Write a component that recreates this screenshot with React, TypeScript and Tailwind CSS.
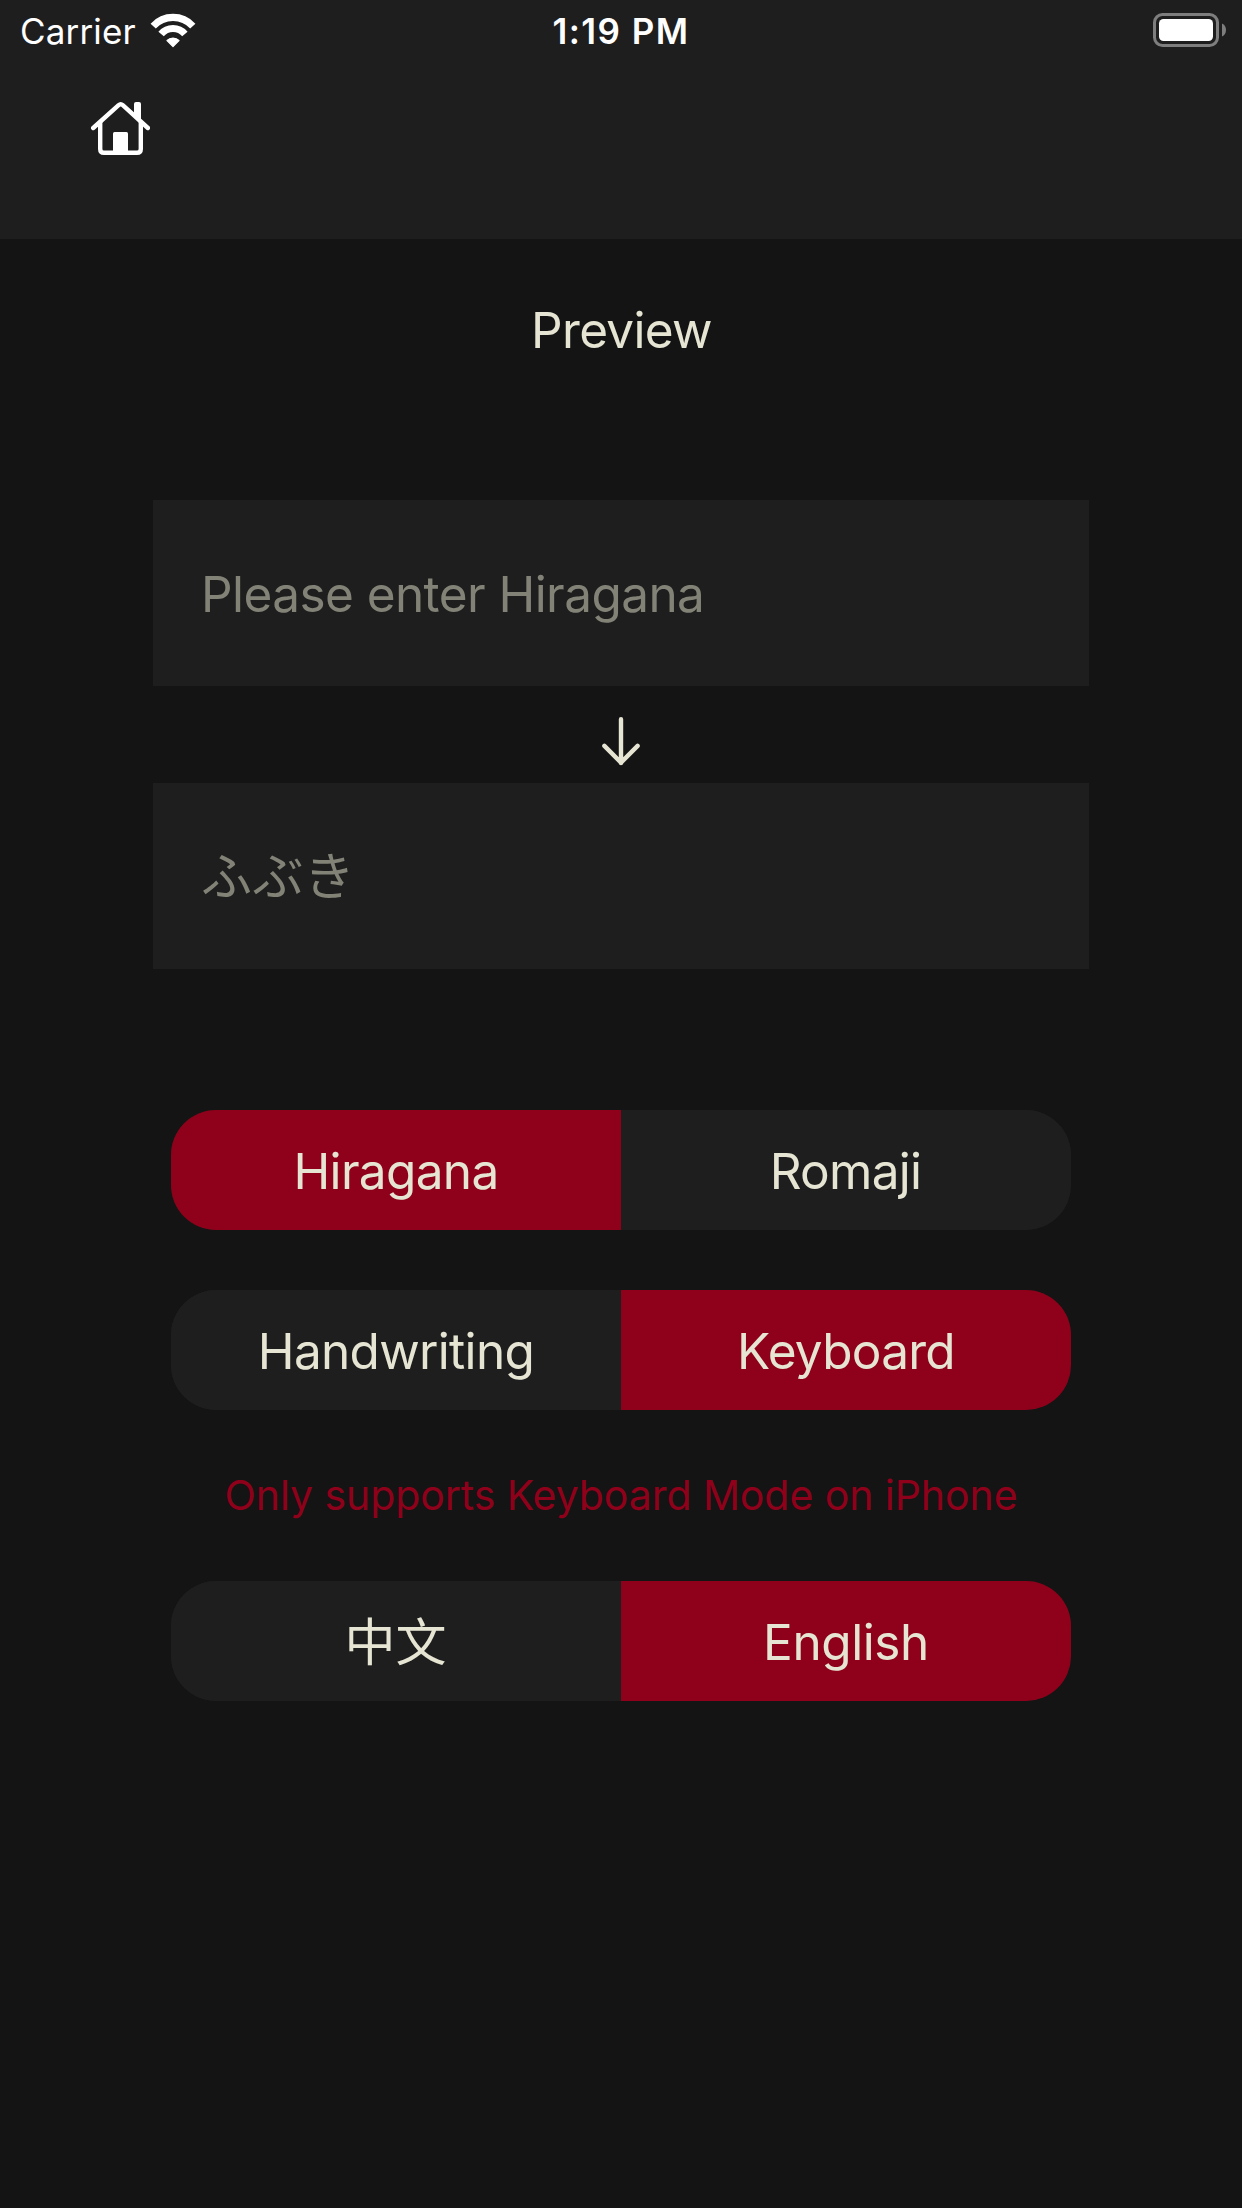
import React from 'react';

function WifiIcon() {
  return (
    <svg className="ml-[14px] h-[35px] w-[46px]" viewBox="0 0 46 35" fill="none">
      <path d="M3.2 13.1A26.9 26.9 0 0 1 42.8 13.1" stroke="#fff" strokeWidth="7.1" />
      <path d="M11.1 21A15.7 15.7 0 0 1 34.9 21" stroke="#fff" strokeWidth="7.1" />
      <path
        d="M17 27.5A8.6 8.6 0 0 1 29 27.5L23 33.5Z"
        fill="#fff"
        stroke="#fff"
        strokeWidth="1.2"
        strokeLinejoin="round"
      />
    </svg>
  );
}

function BatteryIcon() {
  return (
    <svg className="h-[34px] w-[74px]" viewBox="0 0 74 34" fill="none">
      <rect x="1.5" y="1.5" width="63" height="31" rx="8" stroke="#7e7e7e" strokeWidth="3" />
      <rect x="6" y="6" width="54" height="22" rx="4.5" fill="#fff" />
      <path d="M69 10.5C71.5 11.5 73 14 73 17C73 20 71.5 22.5 69 23.5Z" fill="#7e7e7e" />
    </svg>
  );
}

function HomeIcon() {
  return (
    <svg className="h-[54px] w-[60px]" viewBox="90 102 60 54" fill="none">
      <path d="M134 117V104Q134 102 136 102H139Q141 102 141 104V123Z" fill="#fff" />
      <path
        d="M93.2 128L118.6 105.2Q120.7 103.4 122.8 105.2L147.9 128"
        stroke="#fff"
        strokeWidth="4.4"
        strokeLinecap="round"
      />
      <path d="M100.2 122V149Q100.2 152.8 104 152.8H137Q140.8 152.8 140.8 149V122" stroke="#fff" strokeWidth="4.4" />
      <path d="M113 153V133.5Q113 132 114.5 132H126.5Q128 132 128 133.5V153Z" fill="#fff" />
    </svg>
  );
}

function ArrowDown() {
  return (
    <svg className="h-[50px] w-[40px]" viewBox="0 0 40 50" fill="none">
      <path
        d="M20 3.2V47M3.4 29.9L20 46.6L36.6 29.9"
        stroke="#e6e5d3"
        strokeWidth="4.4"
        strokeLinecap="round"
        strokeLinejoin="round"
      />
    </svg>
  );
}

type Option = { label: string; active?: boolean; className: string };

function Segmented({ options }: { options: [Option, Option] }) {
  return (
    <div className="grid h-[120px] w-[900px] grid-cols-2 overflow-hidden rounded-[45px] bg-[#1e1e1e]">
      {options.map((o) => (
        <button
          key={o.label}
          className={`flex items-center justify-center ${o.active ? 'bg-[#8f001a]' : 'bg-[#1e1e1e]'} ${o.className}`}
        >
          {o.label}
        </button>
      ))}
    </div>
  );
}

export default function App() {
  return (
    <div className="flex h-[2208px] w-[1242px] flex-col bg-[#141414] font-['Inter','Noto_Sans_CJK_SC',sans-serif] text-[49.5px] text-[#e6e5d3]">
      <header className="h-[239px] bg-[#1e1e1e] text-white">
        <div className="grid h-[60px] grid-cols-3 items-center pl-[20px] pr-[15px] text-[35px] leading-[58px]">
          <div className="flex items-center">
            <span className="pt-[2px] tracking-[0.15px]">Carrier</span>
            <WifiIcon />
          </div>
          <div className="pt-[2px] pr-[5px] text-center font-[560] tracking-[1.45px]">1:19 PM</div>
          <div className="flex justify-end">
            <BatteryIcon />
          </div>
        </div>
        <button className="mt-[42px] ml-[90px] block">
          <HomeIcon />
        </button>
      </header>

      <main className="flex flex-col items-center">
        <h1 className="flex h-[182px] items-center pl-[1px] tracking-[-0.68px]">Preview</h1>

        <div className="mt-[79px] flex h-[186px] w-[936px] items-center bg-[#1e1e1e] pt-[2px] pl-[48px] tracking-[-0.57px] text-[#828277]">
          Please enter Hiragana
        </div>
        <div className="flex h-[97px] items-center justify-center pt-[14px] pb-[1px]">
          <ArrowDown />
        </div>
        <div className="flex h-[186px] w-[936px] items-center bg-[#1e1e1e] pb-[6px] pl-[48px] font-['Noto_Sans_CJK_JP',sans-serif] text-[51px] tracking-[0.4px] text-[#828277]">
          ふぶき
        </div>

        <div className="mt-[141px] flex flex-col gap-[60px]">
          <Segmented
            options={[
              { label: 'Hiragana', active: true, className: 'pt-[2px] tracking-[-0.66px]' },
              { label: 'Romaji', className: 'pt-[2px] pr-[1px] tracking-[-0.7px]' },
            ]}
          />
          <Segmented
            options={[
              { label: 'Handwriting', className: 'pt-[2px] tracking-[-0.68px]' },
              { label: 'Keyboard', active: true, className: 'pt-[2px] tracking-[-0.72px]' },
            ]}
          />
        </div>

        <p className="flex h-[171px] items-center text-[41px] tracking-[-0.07px] text-[#8f001a]">
          Only supports Keyboard Mode on iPhone
        </p>

        <Segmented
          options={[
            { label: '中文', className: "pb-[3px] pr-[1px] font-['Noto_Sans_CJK_SC',sans-serif] text-[51px]" },
            { label: 'English', active: true, className: 'pt-[2px] tracking-[-0.41px]' },
          ]}
        />
      </main>
    </div>
  );
}
